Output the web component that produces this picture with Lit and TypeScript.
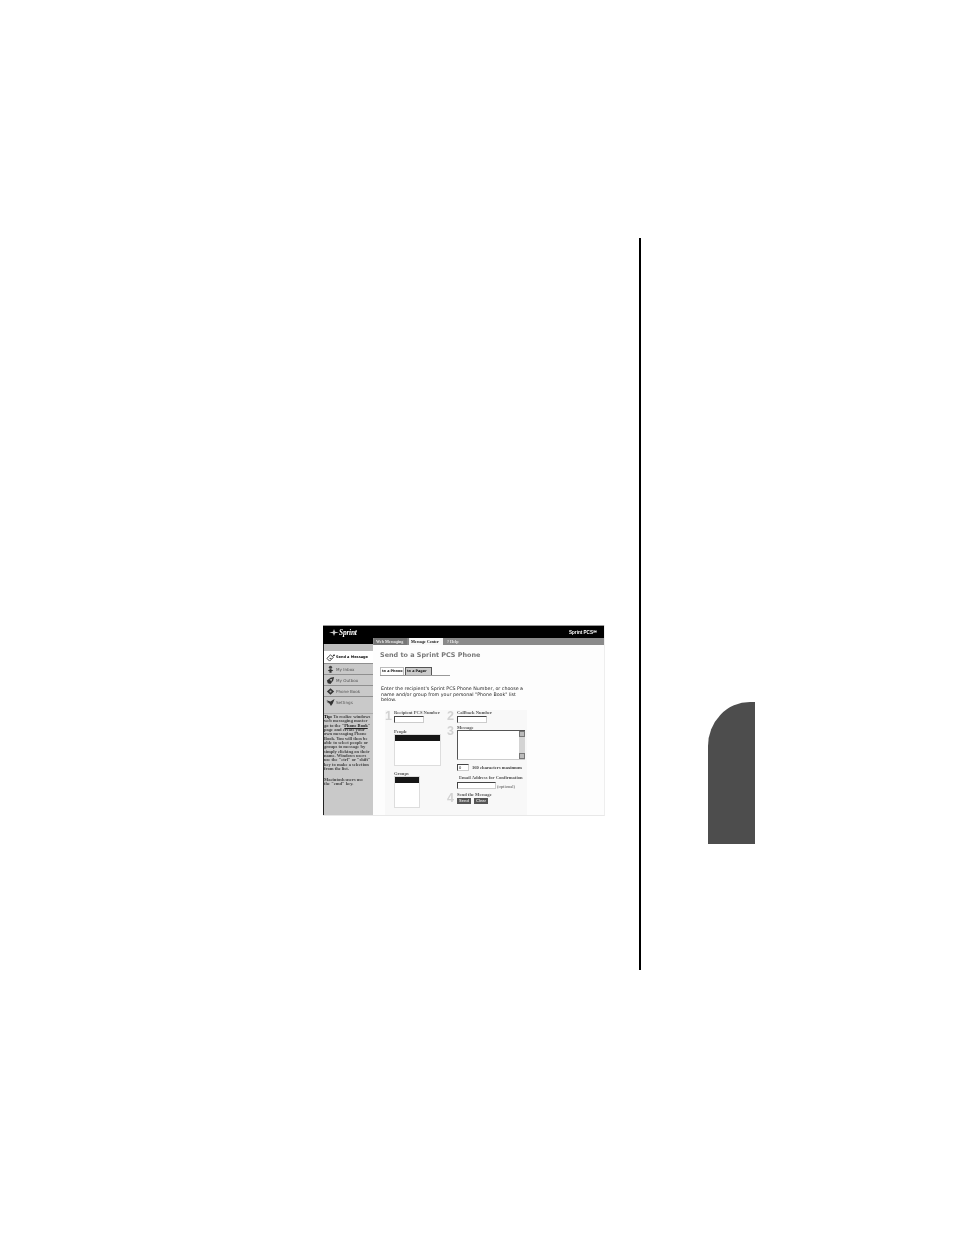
import { LitElement, html, css, svg } from "lit";
import { customElement } from "lit/decorators.js";

const icons = [
  svg`<path d="M1 6 L5 2 L8 5 L4 9 Z M4 6 L6 6" fill="none" stroke="#333" stroke-width="1"/><path d="M7 4 L9 1 L10 3 Z" fill="#222"/>`,
  svg`<circle cx="5" cy="2.5" r="1.8" fill="#444"/><path d="M2 6 L5 4.5 L8 6 L5 8 Z" fill="#333"/><path d="M3 9 L7 9 L5 7.5 Z" fill="#555"/>`,
  svg`<path d="M1 5 L5 2 L9 1 L8 5 L5 9 L2 8 Z" fill="#333"/><path d="M4 4 L7 3 L6 6 Z" fill="#bbb"/>`,
  svg`<path d="M1 5 L5 1.5 L9 5 L5 8.5 Z" fill="#333"/><circle cx="5" cy="5" r="1.2" fill="#aaa"/>`,
  svg`<path d="M0.5 2.5 L5 4 L9.5 1 L7.5 6 L5.5 9 L4 6 Z" fill="#333"/><path d="M1 4 L4 6" stroke="#555" stroke-width="1"/>`,
];
const nav = ["Send a Message", "My Inbox", "My Outbox", "Phone Book", "Settings"];

@customElement("app-root")
export class AppRoot extends LitElement {
  static styles = css`
    :host { display: block; width: 954px; height: 1235px; background: #fff; overflow: hidden; }
    * { box-sizing: border-box; }
    .page { display: flex; align-items: flex-start; height: 1235px; }
    .shot { margin: 625px 0 0 323px; width: 282px; height: 191px; flex: none; display: flex; flex-direction: column;
      background: #fdfdfd; border-right: 1px solid #eee; border-bottom: 1px solid #e8e8e8; filter: blur(0.4px);
      font-family: "Liberation Serif", serif; overflow: hidden; }
    .rule { margin: 238px 0 0 34px; width: 2px; height: 732px; background: #000; flex: none; }
    .thumb { margin: 702px 0 0 67px; width: 47px; height: 142px; background: #4d4d4d; border-top-left-radius: 42px 44px; flex: none; }

    .top { height: 13px; background: #000; border-top: 1px solid #999; display: flex; align-items: center; justify-content: space-between; padding: 0 7px 0 6px; color: #fff; flex: none; }
    .logo { display: flex; align-items: center; font: italic bold 7.4px "Liberation Serif", serif; letter-spacing: -0.2px; }
    .logo svg { width: 10px; height: 7px; }
    .pcs { font: bold 4.6px "Liberation Sans", sans-serif; white-space: nowrap; }
    .body { flex: 1; display: flex; min-height: 0; }
    .side { width: 50px; flex: none; border-left: 1px solid #222; background: #c9c9c9; display: flex; flex-direction: column; }
    .side-cap { height: 6px; background: #000; margin-left: -1px; flex: none; }
    .side-band { height: 7px; background: #bdbdbd; flex: none; }
    .item { height: 11px; display: flex; align-items: center; gap: 1px; padding-left: 2px; border-top: 1px solid #8f8f8f; font: 4.1px "DejaVu Sans", sans-serif; color: #555; flex: none; white-space: nowrap; }
    .item svg { width: 9px; height: 9px; flex: none; }
    .item.on { height: 12px; background: #fff; color: #111; font: bold 3.5px "DejaVu Sans", sans-serif; border-top: 0; }
    .tip { margin-top: 6px; border-top: 1px solid #aaa; padding: 1px 0 0 0; font: bold 4.55px/4.35px "Liberation Serif", serif; color: #444; white-space: nowrap; }
    .tip b { color: #000; }
    .tip u { color: #222; }
    .tip p { margin: 0 0 6.5px; }
    .main { flex: 1; display: flex; flex-direction: column; min-width: 0; }
    .menu { height: 7px; background: #8a8a8a; display: flex; gap: 2px; padding-left: 1px; font: bold 4.1px "Liberation Serif", serif; flex: none; }
    .menu span { padding: 0 2px; line-height: 7px; color: #e6e6e6; background: #777; white-space: nowrap; }
    .menu .m1 { width: 33px; }
    .menu .m2 { width: 34px; background: #f8f8f8; color: #111; }
    .menu .m3 { width: 18px; background: #8a8a8a; }
    .title { margin: 6px 0 0 7px; font: bold 6.45px/9px "DejaVu Sans", sans-serif; color: #777; white-space: nowrap; }
    .tabs { margin: 7px 0 0 7px; display: flex; width: 70px; border-bottom: 1px solid #999; height: 9px; flex: none; }
    .tabs span { font: bold 3.4px/7px "DejaVu Sans", sans-serif; padding: 0 1px; border: 1px solid #555; border-bottom: 0; white-space: nowrap; color: #111; overflow: hidden; }
    .tabs .t1 { width: 24px; background: #fff; border-color: #bbb; }
    .tabs .t2 { width: 27px; margin-left: 1px; background: #ccc; }
    .para { margin: 10px 0 0 8px; font: 4.75px/5.6px "DejaVu Sans", sans-serif; color: #222; white-space: nowrap; }
    .panel { margin: 7px 0 0 12px; width: 142px; flex: 1; background: #f8f8f8; display: flex; font: bold 4.6px "Liberation Serif", serif; color: #555; }
    .col { display: flex; flex-direction: column; }
    .col.a { width: 62px; }
    .col.b { flex: 1; }
    .row { display: flex; }
    .num { width: 9px; flex: none; font: bold 12.5px/11px "Liberation Sans", sans-serif; color: #d2d2d2; padding-top: 1px; }
    .col.b .num { width: 10px; }
    .lab { line-height: 5px; white-space: nowrap; }
    .in { display: block; background: #fff; border: 1px solid #ccc; border-top: 1px solid #444; border-left: 1px solid #444; }
    .first { margin-top: 1px; }
    .list { margin-left: 9px; background: #fff; border: 1.5px solid #ddd; }
    .list i { display: block; height: 6px; background: #161616; }
    .people { width: 47px; height: 32px; }
    .groups { width: 26px; height: 32px; }
    .small { margin: 7px 0 0 9px; height: 4px; line-height: 4px; }
    .small.g { margin-top: 6px; }
    .ta { display: flex; width: 68px; height: 30px; background: #fff; border: 1px solid #555; border-right: 0; border-bottom: 1px solid #ccc; justify-content: flex-end; }
    .sb { width: 6px; background: #d4d4d4; display: flex; flex-direction: column; justify-content: space-between; }
    .sb i { display: block; height: 6px; background: #bbb; border: 1px solid #777; }
    .count { display: flex; align-items: center; gap: 3px; margin: 4px 0 0 10px; color: #444; white-space: nowrap; }
    .count .in { width: 12px; height: 7px; font: 4px/5px "Liberation Sans", sans-serif; color: #111; padding-left: 1px; }
    .email { margin: 4px 0 0 12px; }
    .emailrow { display: flex; align-items: flex-end; margin: 2px 0 0 10px; }
    .opt { font-weight: 400; margin-left: 1px; line-height: 4px; }
    .btns { display: flex; gap: 3px; margin-top: 1px; }
    .btns span { width: 14px; background: #555; color: #ddd; height: 6px; text-align: center; font: bold 4px/6px "Liberation Sans", sans-serif; }
    .w30 { width: 30px; height: 7px; }
    .w39 { width: 39px; height: 7px; }
    .gap2 { margin-top: 2px; }
    .gap3 { margin-top: 3px; }
  `;

  render() {
    return html`<div class="page">
      <div class="shot">
        <div class="top">
          <div class="logo"><svg viewBox="0 0 10 7"><path d="M0 3.5 L4 2.8 L5 0 L6 2.8 L10 3.5 L6 4.2 L5 7 L4 4.2 Z" fill="#ccc"/></svg>Sprint</div>
          <div class="pcs">Sprint PCS℠</div>
        </div>
        <div class="body">
          <div class="side">
            <div class="side-cap"></div>
            <div class="side-band"></div>
            ${nav.map((n, i) => html`<div class="item ${i === 0 ? "on" : ""}"><svg viewBox="0 0 10 10">${icons[i]}</svg>${n}</div>`)}
            <div class="tip">
              <p><b>Tip:</b> To realize windows<br>web messaging master<br>go to the "<u>Phone Book</u>"<br>page and create your<br>own messaging Phone<br>Book. You will then be<br>able to select people or<br>groups to message by<br>simply clicking on their<br>name. Windows users<br>use the "ctrl" or "shift"<br>key to make a selection<br>from the list.</p>
              <p>Macintosh users use<br>the "cmd" key.</p>
            </div>
          </div>
          <div class="main">
            <div class="menu"><span class="m1">Web Messaging</span><span class="m2">Message Center</span><span class="m3">? Help</span></div>
            <div class="title">Send to a Sprint PCS Phone</div>
            <div class="tabs"><span class="t1">to a Phone</span><span class="t2">to a Pager</span></div>
            <div class="para">Enter the recipient's Sprint PCS Phone Number, or choose a<br>name and/or group from your personal "Phone Book" list<br>below.</div>
            <div class="panel">
              <div class="col a">
                <div class="row">
                  <div class="num">1</div>
                  <div><div class="lab">Recipient PCS Number</div><div class="in first w30"></div></div>
                </div>
                <div class="lab small">People</div>
                <div class="list people"><i></i></div>
                <div class="lab small g">Groups</div>
                <div class="list groups"><i></i></div>
              </div>
              <div class="col b">
                <div class="row">
                  <div class="num">2</div>
                  <div><div class="lab">Callback Number</div><div class="in first w30"></div></div>
                </div>
                <div class="row gap2">
                  <div class="num">3</div>
                  <div><div class="lab">Message</div>
                    <div class="ta"><div class="sb"><i></i><i></i></div></div>
                  </div>
                </div>
                <div class="count"><div class="in">0</div>160 characters maximum</div>
                <div class="lab email">Email Address for Confirmation</div>
                <div class="emailrow">
                  <div class="in w39"></div><span class="lab opt">(optional)</span>
                </div>
                <div class="row gap3">
                  <div class="num">4</div>
                  <div><div class="lab">Send the Message</div>
                    <div class="btns"><span>Send</span><span>Clear</span></div>
                  </div>
                </div>
              </div>
            </div>
          </div>
        </div>
      </div>
      <div class="rule"></div>
      <div class="thumb"></div>
    </div>`;
  }
}
